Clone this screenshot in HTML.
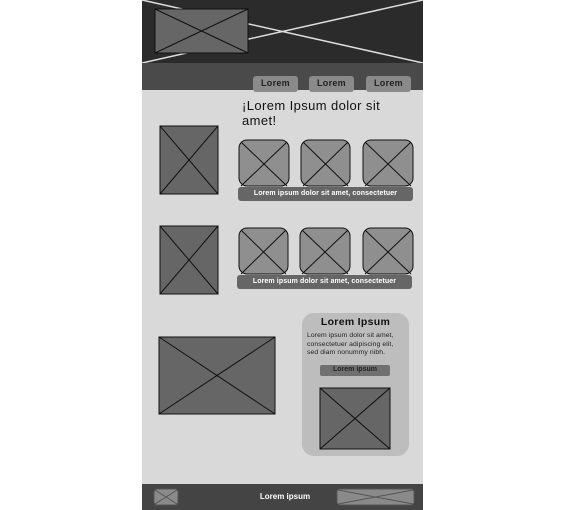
<!DOCTYPE html><html><head><style>
*{margin:0;padding:0;box-sizing:border-box}
body{width:567px;height:510px;background:#fff;position:relative;overflow:hidden;font-family:"Liberation Sans",sans-serif}
.a{position:absolute}
svg.x{position:absolute;overflow:visible}
</style></head><body>
<div class="a" style="left:142px;top:0;width:281px;height:63px;background:#2b2b2b"></div>
<svg class="x" style="left:142px;top:0" width="281" height="63"><line x1="0" y1="0" x2="281" y2="63" stroke="#ddd" stroke-width="1.5"/><line x1="0" y1="63" x2="281" y2="0" stroke="#ddd" stroke-width="1.5"/></svg>
<div class="a" style="left:142px;top:63px;width:281px;height:27px;background:#4a4a4a"></div>
<div class="a" style="left:142px;top:90px;width:281px;height:394px;background:#d9d9d9"></div>
<div class="a" style="left:142px;top:484px;width:281px;height:26px;background:#444"></div>
<svg width="567" height="510" class="x" style="left:0;top:0">
<g stroke="#111" stroke-width="1">
<rect x="155" y="9" width="93" height="44" fill="#666"/><line x1="155" y1="9" x2="248" y2="53"/><line x1="155" y1="53" x2="248" y2="9"/>
<rect x="160" y="126" width="58" height="68" fill="#666"/><line x1="160" y1="126" x2="218" y2="194"/><line x1="160" y1="194" x2="218" y2="126"/>
<rect x="160" y="226" width="58" height="68" fill="#666"/><line x1="160" y1="226" x2="218" y2="294"/><line x1="160" y1="294" x2="218" y2="226"/>
<rect x="159" y="337" width="116" height="77" fill="#666"/><line x1="159" y1="337" x2="275" y2="414"/><line x1="159" y1="414" x2="275" y2="337"/>
<rect x="302" y="313" width="107" height="143" rx="12" fill="#bdbdbd" stroke="none"/>
<rect x="320" y="388" width="70" height="61" fill="#666"/><line x1="320" y1="388" x2="390" y2="449"/><line x1="320" y1="449" x2="390" y2="388"/>
<rect x="320" y="365" width="70" height="11" rx="2" fill="#707070" stroke="none"/>
</g>
<g stroke="#111" stroke-width="1" fill="#8f8f8f">
<rect x="239" y="140" width="50" height="46" rx="8"/><line x1="241" y1="142" x2="287" y2="186"/><line x1="241" y1="186" x2="287" y2="142"/>
<rect x="301" y="140" width="49" height="46" rx="8"/><line x1="303" y1="142" x2="348" y2="186"/><line x1="303" y1="186" x2="348" y2="142"/>
<rect x="363" y="140" width="50" height="46" rx="8"/><line x1="365" y1="142" x2="411" y2="186"/><line x1="365" y1="186" x2="411" y2="142"/>
<rect x="239" y="228" width="49" height="46" rx="8"/><line x1="241" y1="230" x2="286" y2="274"/><line x1="241" y1="274" x2="286" y2="230"/>
<rect x="300" y="228" width="50" height="46" rx="8"/><line x1="302" y1="230" x2="348" y2="274"/><line x1="302" y1="274" x2="348" y2="230"/>
<rect x="363" y="228" width="50" height="46" rx="8"/><line x1="365" y1="230" x2="411" y2="274"/><line x1="365" y1="274" x2="411" y2="230"/>
</g>
<rect x="238" y="187" width="175" height="14" rx="3" fill="#666"/>
<rect x="237" y="275" width="175" height="14" rx="3" fill="#666"/>
<g fill="#8a8a8a"><rect x="253" y="76" width="45" height="16" rx="3"/><rect x="309" y="76" width="45" height="16" rx="3"/><rect x="366" y="76" width="45" height="16" rx="3"/></g>
<g stroke="#555" stroke-width="1" fill="#8a8a8a">
<rect x="154" y="489" width="24" height="16" rx="3"/><line x1="155" y1="490" x2="177" y2="504"/><line x1="155" y1="504" x2="177" y2="490"/>
<rect x="337" y="489" width="77" height="16" rx="3"/><line x1="338" y1="490" x2="413" y2="504"/><line x1="338" y1="504" x2="413" y2="490"/>
</g>
</svg>
<div class="a" style="left:253px;top:78px;width:45px;font-size:9px;font-weight:bold;text-align:center;color:#222;letter-spacing:0.3px">Lorem</div>
<div class="a" style="left:309px;top:78px;width:45px;font-size:9px;font-weight:bold;text-align:center;color:#222;letter-spacing:0.3px">Lorem</div>
<div class="a" style="left:366px;top:78px;width:45px;font-size:9px;font-weight:bold;text-align:center;color:#222;letter-spacing:0.3px">Lorem</div>
<div class="a" style="left:242px;top:98px;width:160px;font-size:13px;line-height:15px;color:#111;letter-spacing:0.4px">¡Lorem Ipsum dolor sit amet!</div>
<div class="a" style="left:238px;top:190px;width:175px;font-size:7px;font-weight:bold;text-align:center;color:#fff;letter-spacing:0.1px">Lorem ipsum dolor sit amet, consectetuer</div>
<div class="a" style="left:237px;top:278px;width:175px;font-size:7px;font-weight:bold;text-align:center;color:#fff;letter-spacing:0.1px">Lorem ipsum dolor sit amet, consectetuer</div>
<div class="a" style="left:302px;top:316px;width:107px;font-size:10.5px;font-weight:bold;text-align:center;color:#111;letter-spacing:0.3px">Lorem Ipsum</div>
<div class="a" style="left:307px;top:332px;width:100px;font-size:6.8px;line-height:8.5px;color:#222;letter-spacing:0.1px">Lorem ipsum dolor sit amet,<br>consectetuer adipiscing elit,<br>sed diam nonummy nibh.</div>
<div class="a" style="left:320px;top:366px;width:70px;font-size:7px;text-align:center;color:#222;font-weight:bold">Lorem ipsum</div>
<div class="a" style="left:235px;top:492px;width:100px;font-size:8px;font-weight:bold;text-align:center;color:#fff">Lorem ipsum</div>
</body></html>
